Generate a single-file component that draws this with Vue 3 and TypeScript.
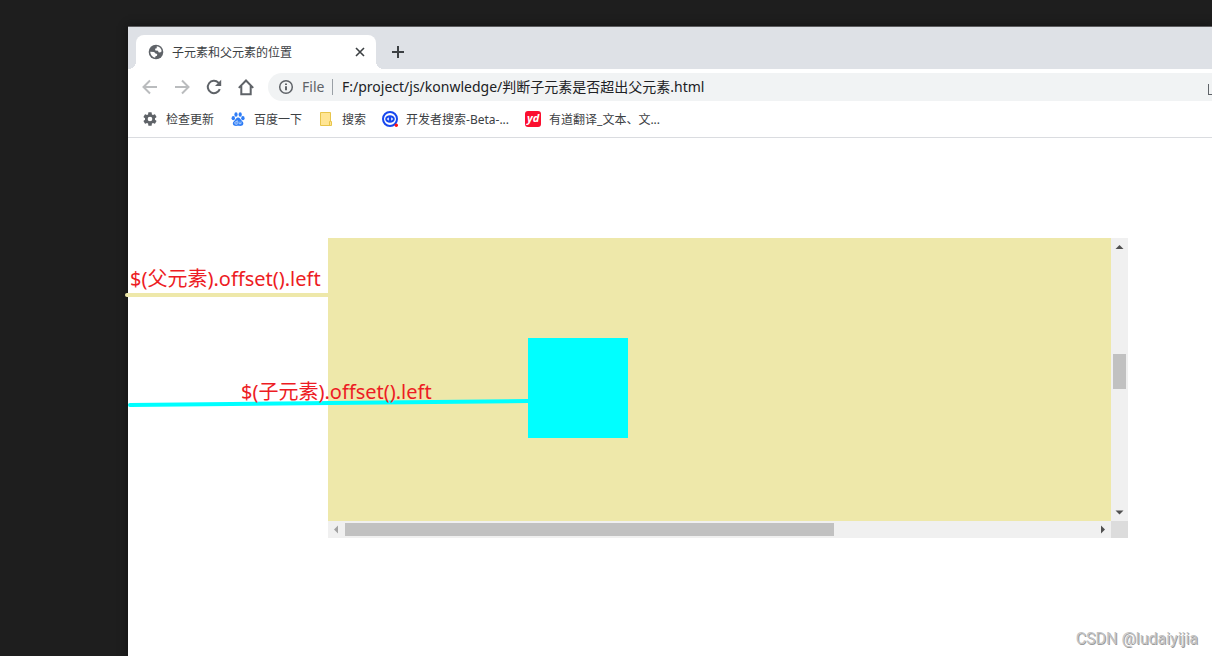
<script setup lang="ts">
import { ref } from 'vue'

type BookmarkIcon = 'gear' | 'paw' | 'folder' | 'dev' | 'yd'

interface Bookmark {
  icon: BookmarkIcon
  label: string
}

const title = '子元素和父元素的位置'
const address = ref('F:/project/js/konwledge/判断子元素是否超出父元素.html')

const bookmarks: Bookmark[] = [
  { icon: 'gear', label: '检查更新' },
  { icon: 'paw', label: '百度一下' },
  { icon: 'folder', label: '搜索' },
  { icon: 'dev', label: '开发者搜索-Beta-...' },
  { icon: 'yd', label: '有道翻译_文本、文...' },
]
</script>

<template>
  <div class="desktop">
    <div class="browser">
      <header class="tabstrip">
        <div class="tab">
          <svg class="globe" viewBox="0 0 18 18" aria-hidden="true">
            <circle cx="9" cy="9" r="7.300" />
            <path class="land" d="M9.800 3.300c2.600.3 4.600 2.300 4.900 4.900l-1.600 1.300-1.600-.3-.5-1.500-2.600-.2-.4-1.700 1.700-.5z" />
            <path class="land" d="M3.200 8.800l3.900.2 1.400 1.500 1.700.5-.2 1.700-1.500.5-.4 1.600c-2.700-.4-4.700-2.900-4.900-6z" />
          </svg>
          <span class="tab-title">{{ title }}</span>
          <button class="tab-close" type="button" aria-label="Close tab">
            <svg viewBox="0 0 10 10"><path d="M1 1l8 8M9 1l-8 8" /></svg>
          </button>
        </div>
        <button class="new-tab" type="button" aria-label="New tab">
          <svg viewBox="0 0 12 12"><path d="M6 0v12M0 6h12" /></svg>
        </button>
      </header>

      <div class="toolbar">
        <button class="nav off" type="button" aria-label="Back">
          <svg viewBox="0 0 20 20"><path d="M17 10H4M10 3.500l-6.500 6.500 6.500 6.500" /></svg>
        </button>
        <button class="nav off" type="button" aria-label="Forward">
          <svg viewBox="0 0 20 20"><path d="M3 10h13M10 3.500l6.500 6.500-6.500 6.500" /></svg>
        </button>
        <button class="nav" type="button" aria-label="Reload">
          <svg viewBox="0 0 20 20">
            <path d="M15.800 12.200A6.200 6.200 0 1 1 14.400 5.600L15.500 6.800" />
            <path class="solid" d="M17.200 2.800V9H11z" />
          </svg>
        </button>
        <button class="nav" type="button" aria-label="Home">
          <svg viewBox="0 0 20 20"><path d="M2.800 10.900L10 3.500l7.200 7.400M5.300 9v8.200h9.400V9" /></svg>
        </button>
        <div class="omnibox">
          <svg class="info" viewBox="0 0 16 16" aria-hidden="true">
            <circle cx="8" cy="8" r="6.300" />
            <path d="M8 7.200v4M8 4.400v1.600" />
          </svg>
          <label class="scheme" for="address">File</label>
          <input id="address" v-model="address" type="text" spellcheck="false" />
          <span class="share"></span>
        </div>
      </div>

      <nav class="bookmarks">
        <a v-for="b in bookmarks" :key="b.label" href="#" class="bookmark">
          <svg v-if="b.icon === 'gear'" viewBox="0 0 24 24">
            <path fill="#5f6368" fill-rule="evenodd" d="M19.430 12.980c.04-.32.07-.64.07-.98s-.03-.66-.07-.98l2.110-1.650c.19-.15.24-.42.12-.64l-2-3.460c-.12-.22-.39-.3-.61-.22l-2.490 1c-.52-.4-1.080-.73-1.690-.98l-.38-2.650A.488.488 0 0 0 14 2h-4c-.25 0-.46.18-.49.42l-.38 2.650c-.61.25-1.170.59-1.690.98l-2.490-1c-.23-.09-.49 0-.61.22l-2 3.460c-.13.22-.07.49.12.64l2.110 1.650c-.04.32-.07.65-.07.98s.03.66.07.98l-2.110 1.650c-.19.15-.24.42-.12.64l2 3.460c.12.22.39.3.61.22l2.490-1c.52.4 1.080.73 1.690.98l.38 2.650c.03.24.24.42.49.42h4c.25 0 .46-.18.49-.42l.38-2.650c.61-.25 1.170-.59 1.690-.98l2.490 1c.23.09.49 0 .61-.22l2-3.460c.12-.22.07-.49-.12-.64zM12 15.500a3.500 3.500 0 1 1 0-7 3.500 3.500 0 0 1 0 7z" />
          </svg>
          <svg v-else-if="b.icon === 'paw'" viewBox="0 0 16 16">
            <g fill="#2f7df6">
              <ellipse cx="3.300" cy="7.200" rx="1.700" ry="2.100" />
              <ellipse cx="6" cy="3.500" rx="1.600" ry="2.200" />
              <ellipse cx="10.200" cy="3.500" rx="1.600" ry="2.200" />
              <ellipse cx="12.900" cy="7.200" rx="1.700" ry="2.100" />
              <path d="M8.100 6.600c-1.800 0-2.300 1.700-3.500 2.800-1.400 1.300-2 2.300-1.700 3.700.5 2 2.500 1.900 5.200 1.700 2.700.2 4.700.3 5.200-1.700.3-1.400-.3-2.400-1.700-3.700-1.200-1.100-1.700-2.800-3.500-2.800z" />
            </g>
            <path d="M7.200 9.200v4H6a1.200 1.200 0 0 1 0-2.500h1.200M9 10.500v2.200h2v-2.200" fill="none" stroke="#c9dfff" stroke-width=".8" />
          </svg>
          <svg v-else-if="b.icon === 'folder'" viewBox="0 0 16 16">
            <path d="M2.500 1.500h10v9h1v4h-11z" fill="#ffe594" stroke="#e8c54b" />
            <path d="M11.500 14v-3.500h1" fill="none" stroke="#e8c54b" />
          </svg>
          <svg v-else-if="b.icon === 'dev'" viewBox="0 0 16 16">
            <circle cx="8" cy="8" r="7" fill="#fff" stroke="#1747ee" stroke-width="2" />
            <ellipse cx="8" cy="8" rx="4.800" ry="3.800" fill="#1747ee" />
            <path d="M6.800 6.300v3.400L4.800 8zM9.200 6.300v3.400l2-1.700z" fill="#fff" />
            <circle cx="14.300" cy="14.300" r="1.700" fill="#f11" />
          </svg>
          <span v-else class="yd" aria-hidden="true">yd</span>
          <span>{{ b.label }}</span>
        </a>
      </nav>

      <main class="page">
        <section class="parent">
          <div class="view"><div class="child"></div></div>
          <div class="bar vertical">
            <svg viewBox="0 0 17 17"><path d="M4.500 11L8.500 7l4 4z" /></svg>
            <div class="track"><i class="thumb"></i></div>
            <svg viewBox="0 0 17 17"><path d="M4.500 6.500l4 4 4-4z" /></svg>
          </div>
          <div class="bar horizontal">
            <svg class="dim" viewBox="0 0 17 17"><path d="M10 4.500v8L6 8.500z" /></svg>
            <div class="track"><i class="thumb"></i></div>
            <svg viewBox="0 0 17 17"><path d="M7 4.500v8l4-4z" /></svg>
          </div>
          <div class="corner"></div>
        </section>

        <svg class="lines" aria-hidden="true">
          <path d="M2 157H203" stroke="#eee8aa" />
          <path d="M5 267L403 263" stroke="#00ffff" />
        </svg>
        <p class="note note-parent">$(父元素).offset().left</p>
        <p class="note note-child">$(子元素).offset().left</p>
        <p class="watermark">CSDN @ludaiyijia</p>
      </main>
    </div>
  </div>
</template>

<style>
body {
  margin: 0;
  background: #1e1e1e;
}
</style>

<style scoped>
* {
  box-sizing: border-box;
}
.desktop {
  display: flex;
  min-height: 100vh;
  padding: 26px 0 0 128px;
  overflow: hidden;
  background: #1e1e1e;
  font-family: "Noto Sans", "Noto Sans CJK SC", sans-serif;
  font-size: 12px;
  color: #3c4043;
}
.browser {
  flex: 1;
  min-width: 0;
  display: flex;
  flex-direction: column;
  border-top: 1px solid #5c5c5e;
  background: #fff;
  box-shadow: 0 0 8px #111;
}
button {
  display: flex;
  align-items: center;
  justify-content: center;
  padding: 0;
  border: 0;
  background: none;
}
svg {
  flex: none;
}
.tabstrip {
  display: flex;
  align-items: flex-end;
  height: 42px;
  padding-left: 8px;
  background: #dee1e6;
}
.tab {
  position: relative;
  display: flex;
  align-items: center;
  width: 240px;
  height: 34px;
  padding: 0 8px 0 11px;
  border-radius: 8px 8px 0 0;
  background: #fff;
}
.tab::before,
.tab::after {
  content: "";
  position: absolute;
  bottom: 0;
  width: 8px;
  height: 8px;
}
.tab::before {
  right: 100%;
  background: radial-gradient(circle at 0 0, #dee1e6 8px, #fff 8px);
}
.tab::after {
  left: 100%;
  background: radial-gradient(circle at 100% 0, #dee1e6 8px, #fff 8px);
}
.globe {
  width: 18px;
  height: 18px;
  margin-right: 7px;
  fill: #5f6368;
}
.globe .land {
  fill: #fff;
}
.tab-title {
  flex: 1;
  white-space: nowrap;
}
.tab-close {
  width: 16px;
  height: 16px;
}
.tab-close svg {
  width: 10px;
  height: 10px;
  stroke: #3c4043;
  stroke-width: 1.600;
}
.new-tab {
  width: 28px;
  height: 34px;
  margin-left: 8px;
}
.new-tab svg {
  width: 12px;
  height: 12px;
  stroke: #3c4043;
  stroke-width: 2;
}
.toolbar {
  display: flex;
  align-items: center;
  height: 36px;
  padding-left: 6px;
}
.nav {
  width: 32px;
  height: 28px;
}
.nav svg {
  width: 20px;
  height: 20px;
  fill: none;
  stroke: #5f6368;
  stroke-width: 2;
}
.nav.off svg {
  stroke: #babcbe;
}
.nav .solid {
  fill: #5f6368;
  stroke: none;
}
.omnibox {
  flex: 1;
  display: flex;
  align-items: center;
  height: 28px;
  margin-left: 6px;
  padding-left: 10px;
  border-radius: 14px 0 0 14px;
  background: #f1f3f4;
  font-size: 14px;
}
.info {
  width: 16px;
  height: 16px;
  margin-right: 8px;
  fill: none;
  stroke: #5f6368;
  stroke-width: 2;
}
.info circle {
  stroke-width: 1.500;
}
.scheme {
  width: 31px;
  height: 16px;
  border-right: 1px solid #9aa0a6;
  line-height: 16px;
  color: #5f6368;
}
.omnibox input {
  flex: 1;
  min-width: 0;
  padding: 0 0 2px 9px;
  border: 0;
  outline: 0;
  background: none;
  font: inherit;
  color: #202124;
}
.share {
  width: 4px;
  height: 11px;
  margin-top: 4px;
  border: solid #5f6368;
  border-width: 0 0 1px 1px;
}
.bookmarks {
  display: flex;
  align-items: center;
  gap: 16px;
  height: 33px;
  padding: 0 14px 4px;
  border-bottom: 1px solid #dadce0;
}
.bookmark {
  display: flex;
  align-items: center;
  gap: 8px;
  color: inherit;
  text-decoration: none;
  white-space: nowrap;
}
.bookmark svg,
.yd {
  width: 16px;
  height: 16px;
}
.bookmark svg {
  overflow: visible;
}
.yd {
  border-radius: 3px;
  background: #fb0f2f;
  font: italic bold 11px/14px "Noto Sans", sans-serif;
  text-align: center;
  color: #fff;
}
.page {
  position: relative;
  flex: 1;
  padding: 100px 84px 118px 200px;
}
.parent {
  display: grid;
  grid-template: 283px 17px / 1fr 17px;
}
.view {
  padding: 100px 200px;
  background: #eee8aa;
}
.child {
  width: 100px;
  height: 100px;
  background: #00ffff;
}
.bar {
  display: flex;
  background: #f0f0f0;
}
.bar svg {
  width: 17px;
  height: 17px;
  fill: #505050;
}
.bar .dim {
  fill: #a3a3a3;
}
.vertical {
  flex-direction: column;
}
.track {
  flex: 1;
  display: flex;
}
.thumb {
  background: #c1c1c1;
}
.vertical .track {
  flex-direction: column;
  justify-content: center;
  padding: 0 2px 17px;
}
.vertical .thumb {
  height: 35px;
}
.horizontal .track {
  padding: 2px 0;
}
.horizontal .thumb {
  width: 489px;
}
.corner {
  background: #dcdcdc;
}
.lines {
  position: absolute;
  top: 0;
  left: -3px;
  width: 420px;
  height: 300px;
  fill: none;
  stroke-width: 4;
  stroke-linecap: round;
}
.note {
  position: absolute;
  margin: 0;
  font-size: 20px;
  line-height: 28px;
  white-space: nowrap;
  color: #ed1c24;
}
.note-parent {
  top: 127px;
  left: 2px;
}
.note-child {
  top: 240px;
  left: 113px;
}
.watermark {
  position: absolute;
  right: 14px;
  bottom: 7px;
  margin: 0;
  font: 16px/20px Roboto, sans-serif;
  color: #c4c4c4;
  text-shadow: 1px 1px 0 #9c9c9c;
}
</style>
